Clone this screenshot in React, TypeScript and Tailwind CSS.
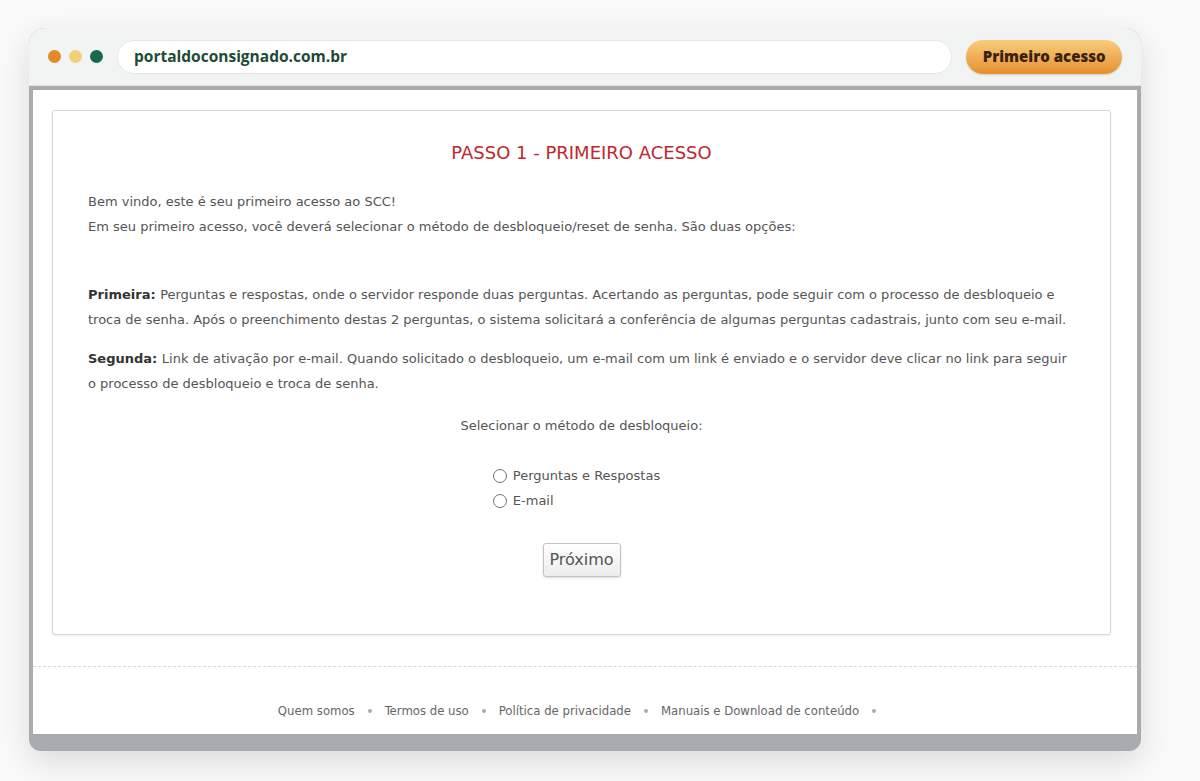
export default function App() {
  const links = ['Quem somos', 'Termos de uso', 'Política de privacidade', 'Manuais e Download de conteúdo'];

  return (
    <div className="min-h-[781px] w-[1200px] bg-[#f8f9f8] pt-[28px] pl-[29px]">
      <div className="w-[1112px] rounded-t-[16px] rounded-b-[12px] bg-[#a9abac] shadow-[0_10px_30px_rgba(0,0,0,0.12)] overflow-hidden">
        {/* browser toolbar */}
        <div className="h-[58px] bg-[#f1f4f2] flex items-center pl-[19px] pr-[19px] border-b border-[#dfe3e0]">
          <div className="flex gap-[8px]">
            <span className="w-[13px] h-[13px] rounded-full bg-[#e08a2a]" />
            <span className="w-[13px] h-[13px] rounded-full bg-[#f3cf78]" />
            <span className="w-[13px] h-[13px] rounded-full bg-[#17694a]" />
          </div>
          <div className="ml-[14px] w-[836px] h-[34px] rounded-full bg-white border border-[#e4e8e5] flex items-center pl-[16px] font-['Open_Sans',sans-serif] font-bold text-[15.5px] text-[#1d4b35]">
            portaldoconsignado.com.br
          </div>
          <button className="ml-[14px] w-[156px] h-[34px] rounded-full bg-gradient-to-b from-[#f7cd7c] to-[#e6902c] shadow-[0_1px_2px_rgba(0,0,0,0.15)] font-['Open_Sans',sans-serif] font-extrabold text-[15px] text-[#3a220c]">
            Primeiro acesso
          </button>
        </div>

        {/* page area */}
        <div className="mx-[4px] mt-[4px] bg-white font-['DejaVu_Sans',sans-serif] text-[#555]">
          <div className="pt-[20px] pl-[19px] pr-[26px]">
            <div className="rounded-[3px] border border-[#d6d6d6] shadow-[0_1px_2px_rgba(0,0,0,0.08)] px-[35px] pt-[31px] pb-[57px]">
              <h1 className="text-center text-[18px] leading-[22px] text-[#c1272d]">PASSO 1 - PRIMEIRO ACESSO</h1>
              <div className="mt-[25px] text-[13px] leading-[25px]">
                <p>Bem vindo, este é seu primeiro acesso ao SCC!</p>
                <p>Em seu primeiro acesso, você deverá selecionar o método de desbloqueio/reset de senha. São duas opções:</p>
              </div>
              <p className="mt-[43px] text-[13px] leading-[25px]">
                <b className="text-[#333]">Primeira: </b>Perguntas e respostas, onde o servidor responde duas perguntas. Acertando as perguntas, pode seguir com o processo de desbloqueio e troca de senha. Após o preenchimento destas 2 perguntas, o sistema solicitará a conferência de algumas perguntas cadastrais, junto com seu e-mail.
              </p>
              <p className="mt-[14px] text-[13px] leading-[25px]">
                <b className="text-[#333]">Segunda: </b>Link de ativação por e-mail. Quando solicitado o desbloqueio, um e-mail com um link é enviado e o servidor deve clicar no link para seguir o processo de desbloqueio e troca de senha.
              </p>
              <p className="mt-[17px] text-center text-[13px] leading-[25px]">Selecionar o método de desbloqueio:</p>
              <div className="mt-[25px] flex justify-center">
                <div className="ml-[-10px] text-[13px] leading-[25px]">
                  <label className="flex items-center gap-[6px]">
                    <span className="w-[14px] h-[14px] rounded-full border border-[#707070] bg-white" />
                    Perguntas e Respostas
                  </label>
                  <label className="flex items-center gap-[6px]">
                    <span className="w-[14px] h-[14px] rounded-full border border-[#707070] bg-white" />
                    E-mail
                  </label>
                </div>
              </div>
              <div className="mt-[30px] flex justify-center">
                <button className="w-[78px] h-[34px] rounded-[3px] border border-[#c4c4c4] bg-gradient-to-b from-white to-[#ececec] shadow-[0_1px_2px_rgba(0,0,0,0.15)] text-[16px] text-[#555]">
                  Próximo
                </button>
              </div>
            </div>
          </div>

          {/* footer */}
          <div className="mt-[31px] border-t border-dashed border-[#d8d8d8] h-[68px] flex items-center justify-center gap-[13px] font-['DejaVu_Sans_Condensed','DejaVu_Sans',sans-serif] text-[13px] text-[#666] pt-[20px] pr-[16px]">
            {links.map((l) => (
              <span key={l} className="flex items-center gap-[13px]">
                <span>{l}</span>
                <span className="w-[4px] h-[4px] rounded-full bg-[#aaa]" />
              </span>
            ))}
          </div>
        </div>
        <div className="h-[17px]" />
      </div>
    </div>
  );
}
